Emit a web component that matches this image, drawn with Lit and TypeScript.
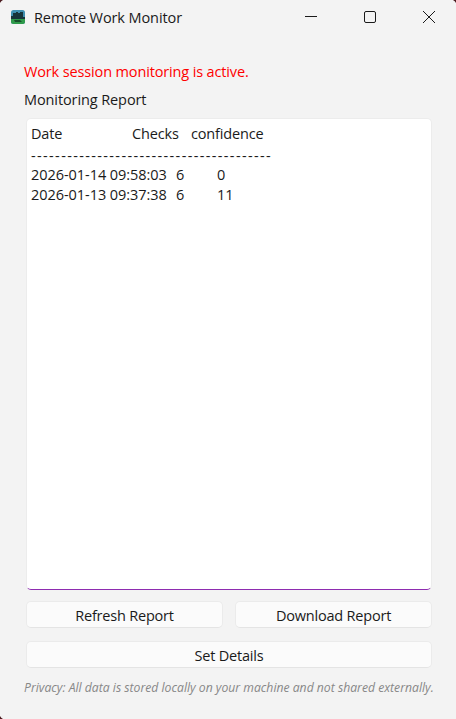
import { LitElement, html, css } from "lit";
import { customElement } from "lit/decorators.js";

@customElement("app-root")
export class AppRoot extends LitElement {
  static styles = css`
    :host {
      display: flex;
      flex-direction: column;
      position: relative;
      width: 456px;
      height: 719px;
      box-sizing: border-box;
      background: #f3f3f3;
      color: #1a1a1a;
      font-family: "Open Sans", "Noto Sans", sans-serif;
      font-size: 14.5px;
      overflow: hidden;
    }
    .corner {
      position: absolute;
      display: block;
      width: 4px;
      height: 4px;
    }
    .tl { left: 0; top: 0; }
    .tr { right: 0; top: 0; transform: scaleX(-1); }
    .bl { left: 0; bottom: 0; transform: scaleY(-1); }
    .titlebar {
      display: flex;
      align-items: center;
      height: 34px;
      flex: none;
      margin-right: -2px;
    }
    .icon {
      width: 14px;
      height: 14px;
      margin-left: 11px;
      flex: none;
      display: block;
    }
    .title {
      margin-left: 9px;
      letter-spacing: -0.1px;
      flex: 1;
    }
    .winbtn {
      width: 59px;
      height: 34px;
      display: flex;
      align-items: center;
      justify-content: center;
      flex: none;
    }
    .winbtn svg {
      display: block;
      width: 14px;
      height: 14px;
    }
    .body {
      flex: 1;
      display: flex;
      flex-direction: column;
      padding: 0 24px;
      min-height: 0;
    }
    .status {
      margin-top: 27px;
      height: 22px;
      line-height: 22px;
      color: #ff0000;
      letter-spacing: -0.14px;
    }
    .label {
      margin-top: 6px;
      height: 22px;
      line-height: 22px;
      letter-spacing: -0.1px;
    }
    .report {
      margin: 7px 0 0 2px;
      height: 472px;
      width: 406px;
      box-sizing: border-box;
      background: #fff;
      border: 1px solid #ececec;
      border-bottom: 1px solid #8e2cb0;
      border-radius: 5px;
      padding: 5px 4px 0;
      flex: none;
    }
    .line {
      height: 20px;
      line-height: 20px;
      white-space: pre;
      display: flex;
    }
    .line span {
      display: block;
      flex: none;
    }
    .head {
      letter-spacing: -0.17px;
    }
    .c1 { width: 101px; }
    .c2 { width: 59px; }
    .d1 { width: 145px; letter-spacing: -0.05px; }
    .d2 { width: 41px; }
    .dash {
      letter-spacing: 1.36px;
      padding-top: 2px;
      height: 19px;
    }
    .row {
      display: flex;
      gap: 12px;
      margin: 11px 0 0 2px;
      width: 406px;
    }
    button {
      font: inherit;
      color: #1a1a1a;
      letter-spacing: -0.2px;
      background: #fbfbfb;
      border: 1px solid #ebebeb;
      border-bottom-color: #e4e4e4;
      border-radius: 5px;
      height: 27px;
      padding: 2px 0 0;
      flex: 1;
      min-width: 0;
    }
    .full {
      display: block;
      width: 406px;
      margin: 13px 0 0 2px;
      flex: none;
    }
    .privacy {
      margin-top: 11px;
      font-size: 12.2px;
      font-style: italic;
      color: #878787;
      white-space: nowrap;
      line-height: 18px;
    }
  `;

  render() {
    const corner = (c: string) => html`<svg class="corner ${c}" viewBox="0 0 4 4"><path d="M0 0H3Q1 1 0 3Z" fill="#4a1a1e" /></svg>`;
    return html`
      <div class="titlebar">
        <svg class="icon" viewBox="0 0 14 14">
          <rect width="14" height="14" rx="2.5" fill="#3f8fb0" />
          <path d="M0 8H14V11.5A2.5 2.5 0 0 1 11.5 14H2.5A2.5 2.5 0 0 1 0 11.5Z" fill="#2f9a4a" />
          <path d="M2 3H5V2H7V3H9V2H12V7H14V9H0V6H2Z" fill="#17343a" />
          <path d="M3 10H9L11 12H4Z" fill="#154f2a" />
        </svg>
        <div class="title">Remote Work Monitor</div>
        <div class="winbtn">
          <svg viewBox="0 0 14 14"><path d="M1 6.5H13" stroke="#1a1a1a" fill="none" /></svg>
        </div>
        <div class="winbtn">
          <svg viewBox="0 0 14 14"><rect x="1.5" y="1.5" width="11" height="11" rx="1.5" stroke="#1a1a1a" fill="none" /></svg>
        </div>
        <div class="winbtn">
          <svg viewBox="0 0 14 14"><path d="M1 1L13 13M13 1L1 13" stroke="#1a1a1a" fill="none" /></svg>
        </div>
      </div>
      <div class="body">
        <div class="status">Work session monitoring is active.</div>
        <div class="label">Monitoring Report</div>
        <div class="report">
          <div class="line head"><span class="c1">Date</span><span class="c2">Checks</span><span>confidence</span></div>
          <div class="line dash">----------------------------------------</div>
          <div class="line"><span class="d1">2026-01-14 09:58:03</span><span class="d2">6</span><span>0</span></div>
          <div class="line"><span class="d1">2026-01-13 09:37:38</span><span class="d2">6</span><span>11</span></div>
        </div>
        <div class="row">
          <button>Refresh Report</button>
          <button>Download Report</button>
        </div>
        <button class="full">Set Details</button>
        <div class="privacy">Privacy: All data is stored locally on your machine and not shared externally.</div>
      </div>
      ${corner("tl")}${corner("tr")}${corner("bl")}
    `;
  }
}
